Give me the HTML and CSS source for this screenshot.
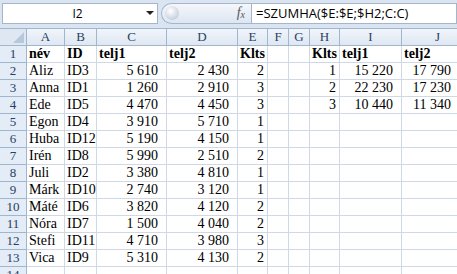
FILE: index.html
```html
<!DOCTYPE html>
<html lang="hu">
<head>
  <meta charset="UTF-8" />
  <title>Munkafüzet</title>
  <link rel="stylesheet" href="styles.css">
</head>
<body>
  <div class="formula-bar">
    <div class="name-box">
      <span class="name">I2</span>
      <span class="arrow"></span>
    </div>
    <div class="fx-pill">
      <span class="knob"></span>
      <span class="fx">f<sub>x</sub></span>
    </div>
    <div class="formula">=SZUMHA($E:$E;$H2;C:C)</div>
  </div>

  <div class="sheet" id="sheet"></div>

  <script>
    const cols = ['A', 'B', 'C', 'D', 'E', 'F', 'G', 'H', 'I', 'J'];
    const numCols = { C: 'pad', D: 'pad', E: 'num', H: 'num', I: 'pad', J: 'pad wide' };
    const rows = [
      ['név', 'ID', 'telj1', 'telj2', 'Klts', '', '', 'Klts', 'telj1', 'telj2'],
      ['Aliz', 'ID3', '5 610', '2 430', '2', '', '', '1', '15 220', '17 790'],
      ['Anna', 'ID1', '1 260', '2 910', '3', '', '', '2', '22 230', '17 230'],
      ['Ede', 'ID5', '4 470', '4 450', '3', '', '', '3', '10 440', '11 340'],
      ['Egon', 'ID4', '3 910', '5 710', '1'],
      ['Huba', 'ID12', '5 190', '4 150', '1'],
      ['Irén', 'ID8', '5 990', '2 510', '2'],
      ['Juli', 'ID2', '3 380', '4 810', '1'],
      ['Márk', 'ID10', '2 740', '3 120', '1'],
      ['Máté', 'ID6', '3 820', '4 120', '2'],
      ['Nóra', 'ID7', '1 500', '4 040', '2'],
      ['Stefi', 'ID11', '4 710', '3 980', '3'],
      ['Vica', 'ID9', '5 310', '4 130', '2'],
      []
    ];

    const sheet = document.getElementById('sheet');
    let html = '<div class="corner"><span class="tri"></span></div>';
    cols.forEach(c => { html += `<div class="col-head">${c}</div>`; });

    rows.forEach((row, r) => {
      html += `<div class="row-head">${r + 1}</div>`;
      cols.forEach((c, i) => {
        const val = row[i] || '';
        let cls = 'cell';
        if (r === 0) cls += ' bold';
        else if (numCols[c]) cls += ' ' + numCols[c];
        html += `<div class="${cls}">${val}</div>`;
      });
    });
    sheet.innerHTML = html;
  </script>
</body>
</html>
```

FILE: styles.css
```css
body {
  margin: 0;
  width: 457px;
  height: 274px;
  overflow: hidden;
  background: #fff;
  font-family: "Liberation Serif", "Times New Roman", serif;
}

.formula-bar {
  display: flex;
  align-items: center;
  height: 29px;
  padding: 3px 0 5px 2px;
  box-sizing: border-box;
  background: #dbe5f1;
  border-bottom: 1px solid #9eb6ce;
}

.name-box {
  display: flex;
  align-items: center;
  width: 156px;
  height: 21px;
  box-sizing: border-box;
  background: #fff;
  border: 1px solid #a5b6cb;
  font-family: "Open Sans", "DejaVu Sans", sans-serif;
  font-size: 12px;
  color: #000;
}

.name-box .name {
  flex: 1;
  text-align: center;
  padding-left: 6px;
}

.name-box .arrow {
  width: 0;
  height: 0;
  margin-right: 3px;
  border-left: 4px solid transparent;
  border-right: 4px solid transparent;
  border-top: 4px solid #222;
}

.fx-pill {
  position: relative;
  display: flex;
  align-items: center;
  justify-content: flex-end;
  width: 90px;
  height: 21px;
  margin-left: 3px;
  box-sizing: border-box;
  border: 1px solid #a5b6cb;
  border-right: none;
  border-radius: 11px 0 0 11px;
  background: linear-gradient(#f4f7fb, #dde6f1);
}

.fx-pill .knob {
  position: absolute;
  left: 3px;
  top: 2px;
  width: 14px;
  height: 14px;
  border-radius: 50%;
  background: radial-gradient(circle at 40% 35%, #ffffff, #c9d3df 70%, #aab6c5);
}

.fx-pill .fx {
  margin-right: 6px;
  font-family: "Liberation Serif", serif;
  font-style: italic;
  font-size: 14px;
  color: #555;
}

.fx-pill .fx sub {
  font-size: 10px;
  vertical-align: -1px;
}

.formula {
  flex: 1;
  height: 21px;
  box-sizing: border-box;
  padding-left: 4px;
  background: #fff;
  border: 1px solid #a5b6cb;
  font-family: "Open Sans", "DejaVu Sans", sans-serif;
  font-size: 13px;
  line-height: 19px;
  color: #000;
}

.sheet {
  display: grid;
  grid-template-columns: 27px 38px 32px 70px 71px 30px 21px 21px 30px 62px 72px;
  grid-template-rows: 17px;
  grid-auto-rows: 17px;
  width: 474px;
}

.sheet > div {
  box-sizing: border-box;
  border-right: 1px solid #d0d7e5;
  border-bottom: 1px solid #d0d7e5;
  white-space: nowrap;
  overflow: hidden;
}

.corner {
  position: relative;
  background: #dfe7f2;
  border-color: #9eb6ce !important;
}

.corner .tri {
  position: absolute;
  right: 2px;
  bottom: 2px;
  width: 0;
  height: 0;
  border-left: 11px solid transparent;
  border-bottom: 11px solid #b7c8dd;
}

.sheet .col-head {
  text-align: center;
  font-size: 13px;
  line-height: 16px;
  color: #27415f;
  background: linear-gradient(#f1f5fb, #dfe7f2);
  border-color: #9eb6ce;
}

.sheet .row-head {
  text-align: center;
  font-size: 13px;
  line-height: 16px;
  color: #27415f;
  background: #e4ecf7;
  border-color: #9eb6ce;
}

.cell {
  padding: 0 2px;
  font-size: 14px;
  line-height: 16px;
  color: #000;
}

.cell.bold {
  font-weight: bold;
}

.cell.num {
  text-align: right;
  padding-right: 3px;
}

.cell.pad {
  text-align: right;
  padding-right: 8px;
}

.cell.pad.wide {
  padding-right: 22px;
}
```
